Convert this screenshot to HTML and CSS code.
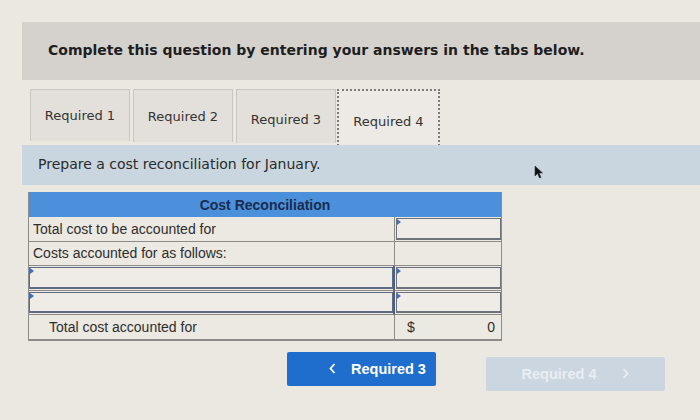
FILE: index.html
```html
<!DOCTYPE html>
<html>
<head>
<meta charset="utf-8">
<link rel="stylesheet" href="styles.css">
</head>
<body>
<div class="page">
  <div class="banner">Complete this question by entering your answers in the tabs below.</div>
  <div class="tabs">
    <div class="tab">Required 1</div>
    <div class="tab">Required 2</div>
    <div class="tab">Required 3</div>
    <div class="tab active">Required 4</div>
  </div>
  <div class="instr">
    <span>Prepare a cost reconciliation for January.</span>
    <svg class="cursor" width="10" height="14" viewBox="0 0 10 14"><path d="M1 1 L1 11 L3.5 8.5 L5.5 13 L7 12.3 L5 8 L8.5 8 Z" fill="#111" stroke="#333" stroke-width="0.6"/></svg>
  </div>
  <div class="recon">
    <div class="head">Cost Reconciliation</div>
    <div class="cell label">Total cost to be accounted for</div>
    <div class="cell val"><div class="box"><i class="flag"></i></div></div>
    <div class="cell label">Costs accounted for as follows:</div>
    <div class="cell val plain"></div>
    <div class="cell inputrow"><div class="box blue"><i class="flag"></i></div></div>
    <div class="cell val"><div class="box"><i class="flag"></i></div></div>
    <div class="cell inputrow"><div class="box blue"><i class="flag"></i></div></div>
    <div class="cell val"><div class="box"><i class="flag"></i></div></div>
    <div class="cell label indent">Total cost accounted for</div>
    <div class="cell val total"><span>$</span><span>0</span></div>
  </div>
  <div class="nav">
    <div class="btn prev"><svg class="chev left" width="7" height="11" viewBox="0 0 7 11"><path d="M5.5 1 L1.5 5.5 L5.5 10" fill="none" stroke="currentColor" stroke-width="1.8"/></svg>Required 3</div>
    <div class="btn next">Required 4<svg class="chev right" width="7" height="11" viewBox="0 0 7 11"><path d="M1.5 1 L5.5 5.5 L1.5 10" fill="none" stroke="currentColor" stroke-width="1.8"/></svg></div>
  </div>
</div>
</body>
</html>
```

FILE: styles.css
```css
html, body {
  margin: 0;
  padding: 0;
}
body {
  background: #ebe7e1;
  width: 700px;
  height: 420px;
  overflow: hidden;
}
.page {
  padding-top: 22px;
}
.banner {
  margin-left: 22px;
  height: 58px;
  background: #d5d2ce;
  box-sizing: border-box;
  padding: 20px 0 0 26px;
  font-family: "DejaVu Sans", Verdana, sans-serif;
  font-weight: bold;
  font-size: 14px;
  color: #1e1e1e;
}
.tabs {
  display: flex;
  margin-left: 30px;
  margin-top: 9px;
  gap: 3px;
  height: 55px;
  align-items: flex-start;
}
.tab {
  width: 100px;
  height: 52px;
  box-sizing: border-box;
  background: #e3dfda;
  border: 1px solid #c9c5c0;
  border-bottom: none;
  display: flex;
  align-items: center;
  justify-content: center;
  font-family: "DejaVu Sans", Verdana, sans-serif;
  font-size: 13px;
  color: #333;
  padding-bottom: 1px;
}
.tab:nth-child(2) { height: 53px; padding-top: 2px; }
.tab:nth-child(3) { height: 54px; padding-top: 6px; }
.tab.active {
  width: 103px;
  height: 60px;
  margin-left: -2px;
  background: #ede9e4;
  border: 2px dotted #7a7a7a;
  padding-top: 6px;
}
.instr {
  margin-left: 22px;
  height: 40px;
  margin-top: 1px;
  background: #c9d5df;
  display: flex;
  align-items: center;
  padding-left: 16px;
  padding-bottom: 3px;
  box-sizing: border-box;
  font-family: "DejaVu Sans", Verdana, sans-serif;
  font-size: 14px;
  color: #2a2a2a;
  position: relative;
}
.cursor {
  position: absolute;
  left: 512px;
  top: 20px;
}
.recon {
  margin-left: 28px;
  margin-top: 7px;
  width: 472px;
  display: grid;
  grid-template-columns: 366px 106px;
  border: 1px solid #8d8b88;
  border-top: none;
  font-family: "Liberation Sans", Arial, sans-serif;
  font-size: 14px;
  color: #2e2e2e;
}
.head {
  grid-column: 1 / 3;
  height: 25px;
  background: #4b90da;
  color: #1b2c4e;
  font-weight: bold;
  display: flex;
  align-items: center;
  justify-content: center;
  font-size: 14px;
}
.cell {
  height: 24.6px;
  box-sizing: border-box;
  border-bottom: 1px solid #8d8b88;
  background: #ece8e2;
}
.label {
  display: flex;
  align-items: center;
  padding-left: 4px;
  border-right: 1px solid #8d8b88;
}
.indent { padding-left: 20px; }
.val {
  padding: 1px 0 1px 1px;
}
.box {
  position: relative;
  height: 100%;
  box-sizing: border-box;
  border: 1px solid #6e737b;
  border-bottom-width: 2px;
  background: #efebe6;
}
.inputrow {
  padding: 1px 0 1px 0;
  border-right: 2px solid #4e5f80;
}
.box.blue {
  border: 1px solid #5f6b82;
  border-bottom-width: 2px;
}
.flag {
  position: absolute;
  left: 0;
  top: 0;
  width: 0;
  height: 0;
  border-top: 3px solid transparent;
  border-bottom: 3px solid transparent;
  border-left: 4px solid #3d6fc7;
}
.total {
  display: flex;
  justify-content: space-between;
  align-items: center;
  padding: 0 6px 0 12px;
}
.nav {
  display: flex;
  margin-top: 11px;
  margin-left: 287px;
  gap: 50px;
  font-family: "Liberation Sans", Arial, sans-serif;
  font-weight: bold;
  font-size: 14.5px;
}
.btn {
  height: 34px;
  display: flex;
  align-items: center;
  border-radius: 2px;
  box-sizing: border-box;
}
.prev {
  width: 149px;
  padding-left: 42px;
  background: #1f6ecd;
  color: #fff;
}
.next {
  width: 179px;
  margin-top: 5px;
  justify-content: center;
  background: #cbd6e1;
  color: #e9eef4;
}
.chev.left { margin-right: 15px; }
.chev.right { margin-left: 26px; }
```
